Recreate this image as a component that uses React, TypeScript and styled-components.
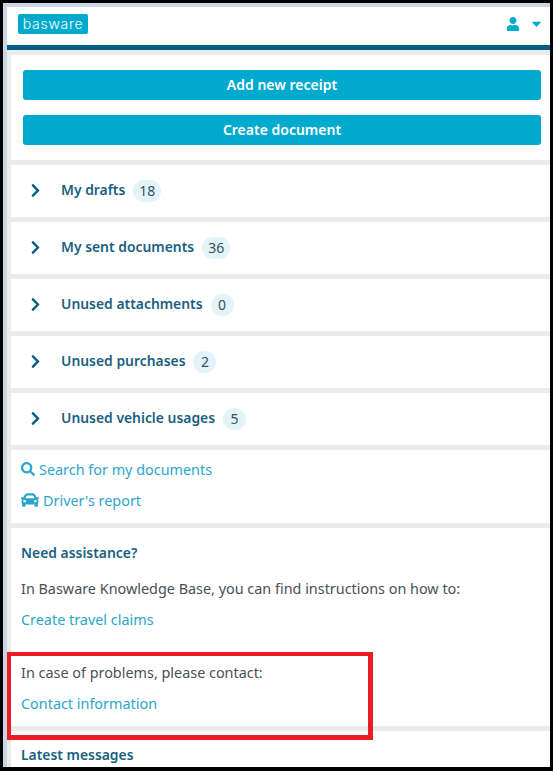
import React from 'react'
import styled, { createGlobalStyle } from 'styled-components'
import { FaCar, FaCaretDown, FaChevronRight, FaSearch, FaUser } from 'react-icons/fa'

const GlobalStyle = createGlobalStyle`
  html, body {
    margin: 0;
    padding: 0;
    background: #000;
  }
  * {
    box-sizing: border-box;
  }
`

const documents = [
  { label: 'My drafts', count: 18 },
  { label: 'My sent documents', count: 36 },
  { label: 'Unused attachments', count: 0 },
  { label: 'Unused purchases', count: 2 },
  { label: 'Unused vehicle usages', count: 5 },
]

const App: React.FC = () => {
  return (
    <Frame>
      <GlobalStyle />
      <Page>
        <Header>
          <Logo>basware</Logo>
          <UserMenu>
            <FaUser size={14} />
            <FaCaretDown size={15} />
          </UserMenu>
        </Header>
        <Content>
          <ButtonPanel>
            <PrimaryButton>Add new receipt</PrimaryButton>
            <PrimaryButton>Create document</PrimaryButton>
          </ButtonPanel>
          {documents.map((doc) => (
            <Row key={doc.label}>
              <Chevron>
                <FaChevronRight size={15} />
              </Chevron>
              <RowLabel>{doc.label}</RowLabel>
              <Count>{doc.count}</Count>
            </Row>
          ))}
          <LinkPanel>
            <IconLink>
              <FaSearch size={14} />
              Search for my documents
            </IconLink>
            <IconLink>
              <FaCar size={18} />
              Driver's report
            </IconLink>
          </LinkPanel>
          <HelpPanel>
            <Heading>Need assistance?</Heading>
            <Text>In Basware Knowledge Base, you can find instructions on how to:</Text>
            <PlainLink>Create travel claims</PlainLink>
            <ContactText>In case of problems, please contact:</ContactText>
            <PlainLink>Contact information</PlainLink>
          </HelpPanel>
          <MessagesPanel>
            <Heading>Latest messages</Heading>
          </MessagesPanel>
        </Content>
      </Page>
      <Highlight />
    </Frame>
  )
}

const Frame = styled.div`
  position: relative;
  width: 553px;
  height: 771px;
  overflow: hidden;
  border: solid #000;
  border-width: 3px 3px 4px 3px;
  background: #cbd5e5;
  padding: 4px 0 0 4px;
  font-family: "Noto Sans", "Open Sans", sans-serif;
`

const Page = styled.div`
  height: 100%;
  background: #ebebeb;
  overflow: hidden;
`

const Header = styled.div`
  height: 43px;
  background: #fff;
  border-bottom: 5px solid #005f87;
  display: flex;
  align-items: center;
  justify-content: space-between;
  padding: 0 6px 5px 11px;
`

const Logo = styled.div`
  width: 70px;
  height: 20px;
  border-radius: 2px;
  background: #00a9ce;
  color: #fff;
  font-family: "Inter", sans-serif;
  font-weight: 300;
  font-size: 14px;
  line-height: 19px;
  text-align: center;
  letter-spacing: 0.7px;
`

const UserMenu = styled.div`
  display: flex;
  align-items: center;
  gap: 9px;
  color: #00a9ce;
`

const Content = styled.div`
  padding: 5px 0 0 4px;
  display: flex;
  flex-direction: column;
  gap: 5px;
`

const ButtonPanel = styled.div`
  height: 105px;
  background: #fff;
  padding: 15px 9px 0 12px;
  display: flex;
  flex-direction: column;
  gap: 15px;
`

const PrimaryButton = styled.button`
  height: 30px;
  border: 0;
  border-radius: 3px;
  padding: 0 0 2px;
  background: #00a9ce;
  color: #fff;
  font-family: inherit;
  font-size: 14px;
  font-weight: 600;
`

const Row = styled.div`
  height: 52px;
  background: #fff;
  display: flex;
  align-items: center;
  padding: 0 0 2px 17px;
`

const Chevron = styled.span`
  display: flex;
  width: 33px;
  color: #005f87;
`

const RowLabel = styled.span`
  margin-bottom: 2px;
  color: #1a5f7f;
  font-size: 13.9px;
  font-weight: 600;
`

const Count = styled.span`
  margin: 2px 0 0 8px;
  min-width: 23px;
  height: 22px;
  padding: 0 6px;
  border-radius: 11px;
  background: #e2f4fa;
  color: #3c4f5c;
  font-size: 14px;
  line-height: 22px;
  text-align: center;
`

const LinkPanel = styled.div`
  height: 73px;
  background: #fff;
  padding: 9px 0 0 10px;
  display: flex;
  flex-direction: column;
  gap: 11px;
`

const IconLink = styled.a`
  display: flex;
  align-items: center;
  gap: 4px;
  height: 20px;
  color: #2ba6cb;
  font-size: 14.4px;
`

const HelpPanel = styled.div`
  height: 198px;
  background: #fff;
  padding: 15px 0 0 10px;
  display: flex;
  flex-direction: column;
`

const Heading = styled.div`
  color: #1a5f7f;
  font-size: 13.9px;
  font-weight: 600;
  line-height: 20px;
`

const Text = styled.div`
  margin-top: 16px;
  color: #4a4f55;
  font-size: 14.4px;
  line-height: 20px;
`

const PlainLink = styled.a`
  margin-top: 11px;
  color: #2ba6cb;
  font-size: 14.4px;
  line-height: 20px;
`

const ContactText = styled(Text)`
  margin-top: 33px;
`

const MessagesPanel = styled.div`
  height: 60px;
  background: #fff;
  padding: 14px 0 0 10px;
`

const Highlight = styled.div`
  position: absolute;
  left: 4px;
  top: 649px;
  width: 366px;
  height: 88px;
  border: solid #ed1c24;
  border-width: 4px 5px 5px 4px;
`

export default App
